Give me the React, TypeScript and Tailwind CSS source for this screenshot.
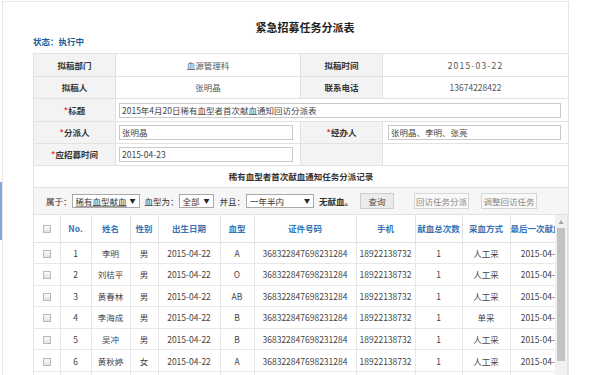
import type { ReactNode } from 'react';

const rows = [
  { no: 1, name: '李明', sex: '男', blood: 'A', way: '人工采' },
  { no: 2, name: '刘桔平', sex: '男', blood: 'O', way: '人工采' },
  { no: 3, name: '黄春林', sex: '男', blood: 'AB', way: '人工采' },
  { no: 4, name: '李海成', sex: '男', blood: 'B', way: '单采' },
  { no: 5, name: '吴冲', sex: '男', blood: 'B', way: '人工采' },
  { no: 6, name: '黄秋婷', sex: '女', blood: 'A', way: '人工采' },
  { no: 7, name: '张亮', sex: '男', blood: 'O', way: '人工采' },
];

const Check = () => (
  <span className="inline-block h-[8px] w-[8px] border border-[#b8b8b8] bg-linear-to-b from-[#fbfbfb] to-[#e2e2e2] align-middle" />
);

const Select = ({ className, children }: { className: string; children: ReactNode }) => (
  <span
    className={`inline-flex h-[14px] items-center justify-between border border-[#a9a9a9] bg-white px-[3px] leading-none text-[#333] ${className}`}
  >
    <span>{children}</span>
    <span className="text-[6px] text-[#222]">▼</span>
  </span>
);

const Req = () => <span className="text-[#e4393c]">*</span>;

const Input = ({ className, value }: { className: string; value: string }) => (
  <div className={`flex h-[15px] items-center border border-[#c9c9c9] bg-white pl-[2px] text-[#444] ${className}`}>
    {value}
  </div>
);

export default function App() {
  const label = 'border border-[#e2e2e2] bg-[#f3f3f3] text-center font-bold text-[#333]';
  const cell = 'border border-[#e2e2e2] text-center text-[#555]';
  const th = 'border-b border-r border-[#e2e2e2] text-center font-bold text-[#3573b6] whitespace-nowrap';
  const td = 'border-b border-r border-[#e8e8e8] text-center whitespace-nowrap';

  return (
    <div className="flex h-[375px] w-[605px] overflow-hidden bg-white pt-[1px] font-['Noto_Sans_CJK_SC','Noto_Sans',sans-serif] text-[8.5px] leading-none text-[#444]">
      {/* splitter handle */}
      <div className="w-[2px] shrink-0 pt-[181px]">
        <div className="h-[58px] bg-[#7ea9d8]" />
      </div>

      <div className="w-[567px] shrink-0 border-l border-r border-t border-[#e6e6e6] pl-[30px] pt-[17px]">
        <div className="w-[535px]">
          <h1 className="h-[16px] pl-[9px] text-center text-[11px] font-bold leading-[16px] text-[#222]">
            紧急招募任务分派表
          </h1>
          <p className="h-[12px] leading-[12px] font-bold text-[#1d5b99]">状态：执行中</p>

          {/* form */}
          <table className="mt-[6px] w-[535px] table-fixed border-collapse">
            <colgroup>
              <col className="w-[82px]" />
              <col className="w-[185px]" />
              <col className="w-[82px]" />
              <col className="w-[186px]" />
            </colgroup>
            <tbody>
              <tr className="h-[23px]">
                <td className={label}>拟稿部门</td>
                <td className={cell}>血源管理科</td>
                <td className={label}>拟稿时间</td>
                <td className={`${cell} tracking-[1.2px]`}>2015-03-22</td>
              </tr>
              <tr className="h-[22px]">
                <td className={label}>拟稿人</td>
                <td className={cell}>张明晶</td>
                <td className={label}>联系电话</td>
                <td className={cell}>13674228422</td>
              </tr>
              <tr className="h-[23px]">
                <td className={label}>
                  <Req />标题
                </td>
                <td colSpan={3} className="border border-[#e2e2e2] pl-[3px]">
                  <Input className="w-[442px]" value="2015年4月20日稀有血型者首次献血通知回访分派表" />
                </td>
              </tr>
              <tr className="h-[22px]">
                <td className={label}>
                  <Req />分派人
                </td>
                <td className="border border-[#e2e2e2] pl-[3px]">
                  <Input className="w-[174px]" value="张明晶" />
                </td>
                <td className={label}>
                  <Req />经办人
                </td>
                <td className="border border-[#e2e2e2] pl-[5px]">
                  <Input className="w-[173px]" value="张明晶、李明、张亮" />
                </td>
              </tr>
              <tr className="h-[22px]">
                <td className={label}>
                  <Req />应招募时间
                </td>
                <td className="border border-[#e2e2e2] pl-[3px]">
                  <Input className="w-[174px]" value="2015-04-23" />
                </td>
                <td className={label} />
                <td className="border border-[#e2e2e2]" />
              </tr>
              <tr className="h-[22px]">
                <td colSpan={4} className="border border-[#e2e2e2] text-center font-bold text-[#333]">
                  稀有血型者首次献血通知任务分派记录
                </td>
              </tr>
              <tr className="h-[27px]">
                <td colSpan={4} className="border border-[#e2e2e2] bg-[#f6f6f6]">
                  <div className="flex items-center pl-[12px] text-[#333]">
                    <span>属于：</span>
                    <Select className="w-[68px]">
                      <span className="underline decoration-[#999]">稀有血型献血</span>
                    </Select>
                    <span className="ml-[5px]">血型为：</span>
                    <Select className="w-[35px]">全部</Select>
                    <span className="ml-[6px]">并且：</span>
                    <Select className="ml-[1px] w-[68px]">一年半内</Select>
                    <span className="ml-[5px] font-bold">无献血。</span>
                    <button className="ml-[7px] h-[16px] w-[34px] border border-[#cfcfcf] bg-[#ebebeb] text-[#555]">
                      查询
                    </button>
                    <button className="ml-[20px] h-[16px] w-[55px] border border-[#d6d6d6] bg-[#f9f9f9] text-[#888]">
                      回访任务分派
                    </button>
                    <button className="ml-[12px] h-[16px] w-[56px] border border-[#d6d6d6] bg-[#f9f9f9] text-[#888]">
                      调整回访任务
                    </button>
                  </div>
                </td>
              </tr>
            </tbody>
          </table>

          {/* record list */}
          <div className="flex h-[200px] border-x border-[#e2e2e2]">
            <div className="w-[522px] overflow-hidden">
              <table className="w-[541px] table-fixed border-collapse">
                <colgroup>
                  <col className="w-[26px]" />
                  <col className="w-[31px]" />
                  <col className="w-[39px]" />
                  <col className="w-[28px]" />
                  <col className="w-[62px]" />
                  <col className="w-[34px]" />
                  <col className="w-[102px]" />
                  <col className="w-[59px]" />
                  <col className="w-[47px]" />
                  <col className="w-[48px]" />
                  <col className="w-[65px]" />
                </colgroup>
                <thead>
                  <tr className="h-[27px]">
                    <th className={th}>
                      <Check />
                    </th>
                    <th className={th}>No.</th>
                    <th className={th}>姓名</th>
                    <th className={th}>性别</th>
                    <th className={th}>出生日期</th>
                    <th className={th}>血型</th>
                    <th className={th}>证件号码</th>
                    <th className={th}>手机</th>
                    <th className={th}>献血总次数</th>
                    <th className={th}>采血方式</th>
                    <th className={th}>最后一次献血时间</th>
                  </tr>
                </thead>
                <tbody>
                  {rows.map((r) => (
                    <tr key={r.no} className="h-[21.6px]">
                      <td className={td}>
                        <Check />
                      </td>
                      <td className={td}>{r.no}</td>
                      <td className={td}>{r.name}</td>
                      <td className={td}>{r.sex}</td>
                      <td className={td}>2015-04-22</td>
                      <td className={td}>{r.blood}</td>
                      <td className={td}>368322847698231284</td>
                      <td className={td}>18922138732</td>
                      <td className={td}>1</td>
                      <td className={td}>{r.way}</td>
                      <td className={td}>2015-04-22</td>
                    </tr>
                  ))}
                </tbody>
              </table>
            </div>

            {/* scrollbar */}
            <div className="flex w-[12px] flex-col items-center bg-[#f1f1f1]">
              <div className="flex h-[13px] items-center text-[5px] text-[#a3a3a3]">▲</div>
              <div className="h-[133px] w-[8px] bg-[#c3c3c3]" />
            </div>
          </div>
        </div>
      </div>
    </div>
  );
}
